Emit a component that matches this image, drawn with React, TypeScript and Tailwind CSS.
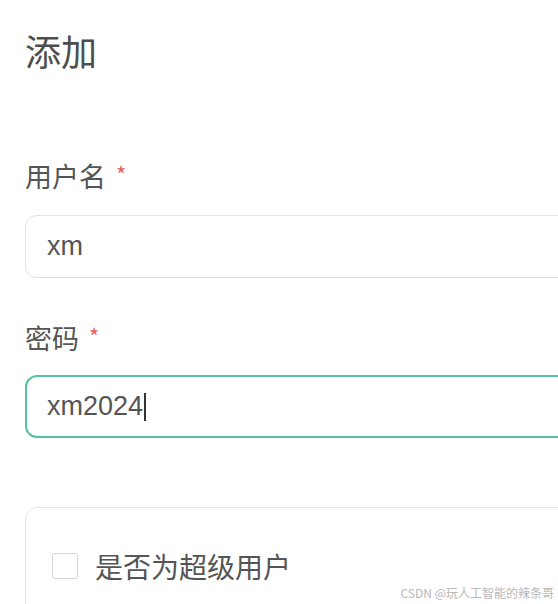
import { useState } from "react";

const cjk = "font-['Noto_Sans_CJK_SC','Noto_Sans',sans-serif]";
const latin = "font-['Liberation_Sans','Noto_Sans_CJK_SC',sans-serif]";

export default function App() {
  const [superUser, setSuperUser] = useState<boolean>(false);

  return (
    <div className={`relative h-[604px] w-[558px] overflow-hidden bg-white ${cjk}`}>
      <div className="flex w-[640px] flex-col pl-[25px] pt-[32px]">
        {/* Title */}
        <h1 className="text-[36px] leading-[36px] text-[#4d4d4d]">添加</h1>

        {/* Username */}
        <FormLabel className="mt-[94px]" text="用户名" />
        <div className="mt-[26px] flex h-[63px] items-center rounded-[12px] border border-[#d3e9e3] px-[21px]">
          <span className={`${latin} text-[27px] text-[#555]`}>xm</span>
        </div>

        {/* Password */}
        <FormLabel className="mt-[46px]" text="密码" />
        <div className="mt-[24px] flex h-[63px] items-center rounded-[12px] border-2 border-[#52c2a2] px-[20px]">
          <span className={`${latin} text-[27px] text-[#555]`}>xm2024</span>
          <span className="ml-[1px] h-[28px] w-[2px] bg-[#333]" />
        </div>

        {/* Card */}
        <div className="mt-[69px] h-[200px] rounded-[12px] border border-[#e2e4e6] pl-[26px] pt-[44px]">
          <label className="flex items-center gap-[17px]">
            <span
              className={`h-[26px] w-[26px] rounded-[3px] border ${superUser ? "border-[#52c2a2] bg-[#52c2a2]" : "border-[#d4d6da] bg-white"}`}
              onClick={() => setSuperUser((prev) => !prev)}
            />
            <span className="text-[28px] leading-[28px] text-[#555]">是否为超级用户</span>
          </label>
        </div>
      </div>

      {/* watermark */}
      <div className="absolute bottom-[5px] right-[4px] text-[12px] leading-[12px] text-[#b8b8b8]">
        CSDN @玩人工智能的辣条哥
      </div>
    </div>
  );
}

function FormLabel({ text, className }: { text: string; className?: string }) {
  return (
    <div className={`${className} flex items-start text-[27px] leading-[27px] text-[#555]`}>
      <span>{text}</span>
      <span className="ml-[10px] text-[22px] leading-[22px] text-[#e8615f]">*</span>
    </div>
  );
}
